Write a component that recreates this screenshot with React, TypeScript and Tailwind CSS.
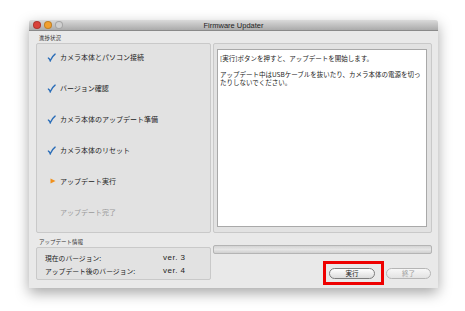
import React from "react";

const jp = "font-['Noto_Sans_CJK_JP','Noto_Sans',sans-serif]";

type Step = { label: string; state: "done" | "current" | "todo" };

const steps: Step[] = [
  { label: "カメラ本体とパソコン接続", state: "done" },
  { label: "バージョン確認", state: "done" },
  { label: "カメラ本体のアップデート準備", state: "done" },
  { label: "カメラ本体のリセット", state: "done" },
  { label: "アップデート実行", state: "current" },
  { label: "アップデート完了", state: "todo" },
];

function Check() {
  return (
    <svg width="9" height="9" viewBox="0 0 10 10">
      <path d="M1.5 5.6 Q2.8 6.2 3.6 8.6 Q5.6 3.6 9 1.2" fill="none" stroke="#2a6db8" strokeWidth="1.5" strokeLinecap="round" />
    </svg>
  );
}

function Arrow() {
  return (
    <svg width="6" height="6" viewBox="0 0 6 6">
      <path d="M0.5 0.5 L5.5 3 L0.5 5.5 Z" fill="#f0901c" />
    </svg>
  );
}

function Light({ color }: { color: string }) {
  return <span className={`block w-[8px] h-[8px] rounded-full border border-black/20 ${color}`} />;
}

export default function App() {
  return (
    <div className={`w-[465px] h-[311px] bg-white pt-[20px] pl-[29px] ${jp}`}>
      <div className="w-[409px] h-[268px] bg-[#e9e9e9] rounded-t-[3px] shadow-[0_5px_14px_rgba(0,0,0,0.35)] flex flex-col">
        {/* title bar */}
        <div className="relative h-[11px] shrink-0 flex items-center px-[4px] gap-[3px] rounded-t-[3px] bg-gradient-to-b from-[#dadada] to-[#ababab] border-b border-[#8a8a8a]">
          <Light color="bg-[#d9413a]" />
          <Light color="bg-[#f2a02f]" />
          <Light color="bg-[#d0d0d0]" />
          <span className="absolute left-0 right-0 text-center text-[7.5px] leading-[11px] text-[#222] font-['Liberation_Sans',sans-serif]">
            Firmware Updater
          </span>
        </div>

        {/* body */}
        <div className="flex-1 flex gap-[2px] pl-[7px] pr-[6px]">
          {/* left column */}
          <div className="w-[175px] flex flex-col">
            <div className="h-[12px] flex items-end pl-[3px] pb-[2px] text-[5.5px] leading-none text-[#333]">進捗状況</div>
            <div className="h-[190px] bg-[#e2e2e2] border border-[#c9c9c9] rounded-[2px] pt-[7px] flex flex-col">
              {steps.map((s) => (
                <div key={s.label} className="h-[31px] flex items-start shrink-0">
                  <div className="w-[23px] h-[12px] flex items-center justify-end pr-[4px]">
                    {s.state === "done" && <Check />}
                    {s.state === "current" && <Arrow />}
                  </div>
                  <span
                    className={`text-[7px] leading-[12px] ${s.state === "todo" ? "text-[#9a9a9a]" : "text-[#222]"}`}
                  >
                    {s.label}
                  </span>
                </div>
              ))}
            </div>
            <div className="h-[14px] flex items-end pl-[3px] pb-[2px] text-[5.5px] leading-none text-[#333]">アップデート情報</div>
            <div className="h-[33px] bg-[#e2e2e2] border border-[#c9c9c9] rounded-[2px] pl-[8px] pt-[5px] flex flex-col gap-[3px] text-[6.8px] leading-[10px] text-[#222]">
              <div className="flex">
                <span className="w-[118px]">現在のバージョン:</span>
                <span className="font-['Liberation_Sans',sans-serif] text-[8px] tracking-[0.5px]">ver. 3</span>
              </div>
              <div className="flex">
                <span className="w-[118px]">アップデート後のバージョン:</span>
                <span className="font-['Liberation_Sans',sans-serif] text-[8px] tracking-[0.5px]">ver. 4</span>
              </div>
            </div>
          </div>

          {/* right column */}
          <div className="w-[219px] flex flex-col">
            <div className="h-[12px]" />
            <div className="h-[190px] bg-[#e2e2e2] border border-[#c9c9c9] rounded-[2px] pt-[5px] pb-[5px] pl-[3px] pr-[4px] flex">
              <div className="flex-1 bg-white border border-[#a9a9a9] px-[2px] pt-[4px] text-[6.5px] leading-[8px] text-[#222]">
                <p>[実行]ボタンを押すと、アップデートを開始します。</p>
                <p className="mt-[8px]">アップデート中はUSBケーブルを抜いたり、カメラ本体の電源を切ったりしないでください。</p>
              </div>
            </div>
            <div className="mt-[12px] h-[9px] rounded-[2px] border border-[#b4b4b4] bg-gradient-to-b from-[#d4d4d4] via-[#e6e6e6] to-[#d0d0d0]" />
            <div className="mt-[14px] flex justify-end gap-[11px] pr-[1px]">
              <div className="relative flex">
                <button className="w-[46px] h-[11px] rounded-full border border-[#7d7d7d] bg-gradient-to-b from-[#ffffff] to-[#dcdcdc] text-[6.5px] leading-[9px] text-[#111]">
                  実行
                </button>
                <span className="absolute left-[-6px] top-[-7px] w-[61px] h-[24px] border-[3px] border-[#ee0000] pointer-events-none" />
              </div>
              <button className="w-[45px] h-[11px] rounded-full border border-[#b5b5b5] bg-gradient-to-b from-[#f7f7f7] to-[#e3e3e3] text-[6.5px] leading-[9px] text-[#a0a0a0]">
                終了
              </button>
            </div>
          </div>
        </div>
      </div>
    </div>
  );
}
